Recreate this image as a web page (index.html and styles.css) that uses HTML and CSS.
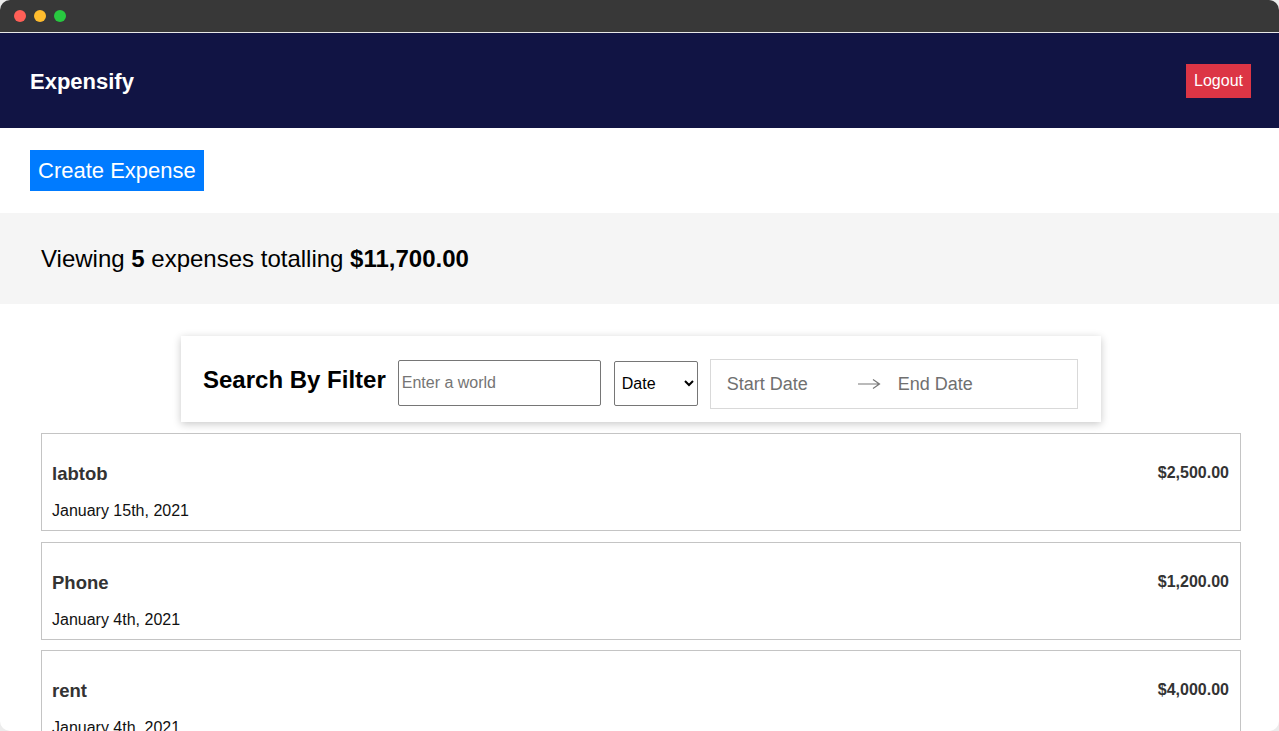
FILE: index.html
```html
<!DOCTYPE html>
<html>
<head>
<meta charset="utf-8">
<link rel="stylesheet" href="styles.css">
</head>
<body>
<div class="window">
  <div class="titlebar">
    <span class="dot red"></span><span class="dot yellow"></span><span class="dot green"></span>
  </div>
  <header class="header">
    <h1 class="brand">Expensify</h1>
    <button class="logout">Logout</button>
  </header>
  <div class="actions">
    <button class="create">Create Expense</button>
  </div>
  <div class="summary">
    <p>Viewing <b>5</b> expenses totalling <b>$11,700.00</b></p>
  </div>
  <div class="filter-wrap">
    <div class="filter">
      <h2 class="filter-title">Search By Filter</h2>
      <input class="search" type="text" placeholder="Enter a world">
      <select class="sort"><option>Date</option><option>Amount</option></select>
      <div class="range">
        <span class="ph start">Start Date</span>
        <svg class="arrow" width="24" height="12" viewBox="0 0 24 12"><path d="M1 6H22M16 1.5L22.5 6L16 10.5" fill="none" stroke="#777" stroke-width="1.2"/></svg>
        <span class="ph">End Date</span>
      </div>
    </div>
  </div>
  <div class="list">
    <div class="item">
      <div><h3 class="name">labtob</h3><p class="date">January 15th, 2021</p></div>
      <h3 class="amount">$2,500.00</h3>
    </div>
    <div class="item">
      <div><h3 class="name">Phone</h3><p class="date">January 4th, 2021</p></div>
      <h3 class="amount">$1,200.00</h3>
    </div>
    <div class="item">
      <div><h3 class="name">rent</h3><p class="date">January 4th, 2021</p></div>
      <h3 class="amount">$4,000.00</h3>
    </div>
  </div>
</div>
</body>
</html>
```
FILE: styles.css
```css
* { box-sizing: border-box; }
html, body { margin: 0; padding: 0; background: #ececec; }
body { font-family: "Liberation Sans", Arial, sans-serif; }
.window {
  width: 1279px; height: 731px; overflow: hidden;
  border-radius: 10px; background: #fff;
}
.titlebar {
  height: 33px; background: #383838; border-bottom: 1px solid #e8e8e8;
  display: flex; align-items: center; gap: 8px; padding-left: 14px; padding-bottom: 1px;
}
.dot { width: 12px; height: 12px; border-radius: 50%; display: inline-block; }
.red { background: #ff5f57; }
.yellow { background: #febc2e; }
.green { background: #28c840; }
.header {
  height: 95px; background: #111444; display: flex; align-items: center;
  justify-content: space-between; padding: 0 28px 0 30px;
}
.brand { margin: 2px 0 0; color: #fff; font-size: 22px; font-weight: bold; }
.logout {
  background: #dc3545; color: #fff; border: none; font-family: inherit;
  font-size: 16px; height: 34px; padding: 0 8px; width: 65px;
}
.actions { padding: 22px 30px; }
.create {
  background: #007bff; color: #fff; border: none; font-family: inherit;
  font-size: 22px; height: 41px; padding: 0 8px; display: block;
}
.summary { background: #f5f5f5; height: 91px; display: flex; align-items: center; padding-left: 41px; }
.summary p { margin: 0; font-size: 24px; color: #000; }
.filter-wrap { display: flex; justify-content: center; padding-top: 32px; padding-left: 3px; }
.filter {
  width: 920px; height: 86px; background: #fff; box-shadow: 0 2px 8px rgba(0,0,0,0.22);
  display: flex; align-items: center; padding: 8px 0 0 22px;
}
.filter-title { margin: 0 12px 6px 0; font-size: 24px; font-weight: bold; color: #000; }
.search {
  width: 203px; height: 46px; border: 1px solid #767676; border-radius: 2px;
  font-family: inherit; font-size: 16px; padding: 0 3px; color: #000;
}
.search::placeholder { color: #757575; }
.sort {
  margin-left: 13px; width: 84px; height: 45px; border: 1px solid #767676; border-radius: 2px;
  font-family: inherit; font-size: 16px; padding: 0 3px; background: #fff; color: #000;
}
.range {
  margin-left: 12px; margin-top: 2px; width: 368px; height: 50px; border: 1px solid #d9d9d9;
  display: flex; align-items: center; padding-left: 16px; font-size: 18px; color: #707070;
}
.range .start { width: 130px; }
.arrow { margin-right: 17px; }
.list { padding: 11px 38px 0 41px; display: flex; flex-direction: column; gap: 10.5px; }
.item {
  border: 1px solid #c4c4c4; height: 98px; flex-shrink: 0;
  display: flex; justify-content: space-between; align-items: flex-start;
  padding: 29px 11px 9px 10px;
}
.name { margin: 0; font-size: 18.5px; line-height: 22px; font-weight: bold; color: #333; }
.date { margin: 17px 0 0; font-size: 16px; line-height: 18px; color: #111; }
.amount { margin: 0; font-size: 16px; line-height: 20px; font-weight: bold; color: #333; }
```
